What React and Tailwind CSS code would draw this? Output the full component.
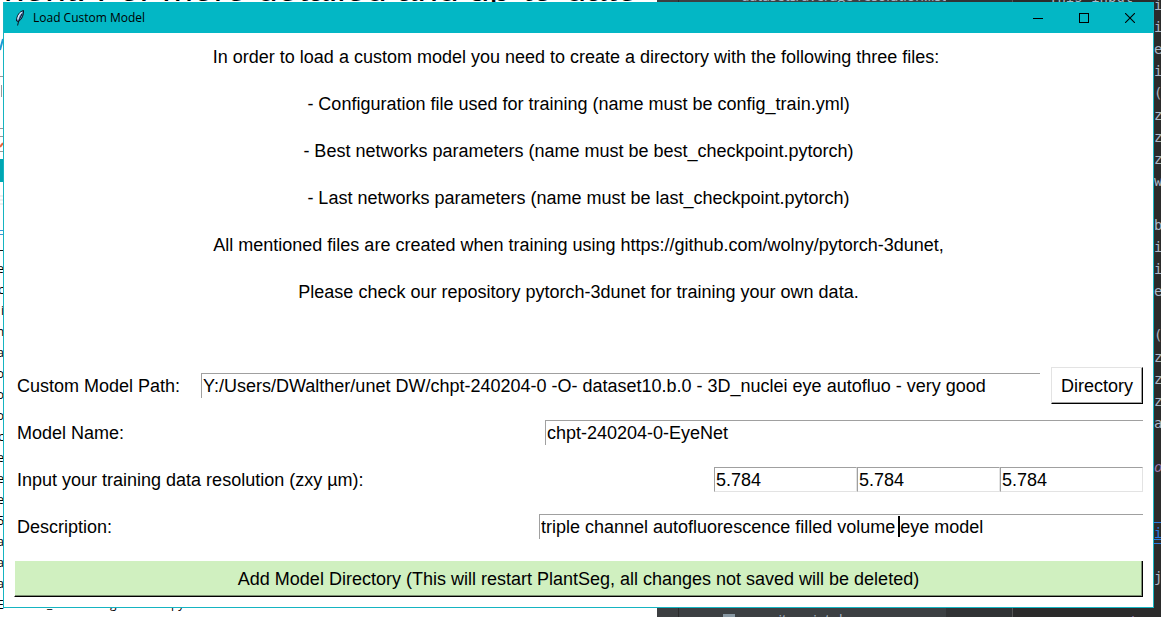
const instructions = [
  'In order to load a custom model you need to create a directory with the following three files:\u00a0',
  '- Configuration file used for training (name must be config_train.yml)',
  '- Best networks parameters (name must be best_checkpoint.pytorch)',
  '- Last networks parameters (name must be last_checkpoint.pytorch)',
  'All mentioned files are created when training using https://github.com/wolny/pytorch-3dunet,',
  'Please check our repository pytorch-3dunet for training your own data.',
];

const listLetters = ['e', 'c', 'i', 'n', 'a', 'o', 'o', 'o', 'c', 'e', 'e', 'e', '5', 'a', 'a', 'a', 'E'];

const codeLines = ['i', 'i', 'e', 'i', '(', 'z', 'z', 'z', 'w', '', 'b', 'i', 'i', 'e', '', '(', 'z', 'z', 'z', 'a', '', 'o', '', '', 'i', '', 'j'];

const fieldClass =
  'block h-[25px] w-full min-w-0 border-l border-t border-[#a0a0a0] bg-white pl-px text-lg leading-6 text-black outline-none';

function Feather() {
  return (
    <svg width="10" height="16" viewBox="0 0 10 16" aria-hidden="true">
      <path d="M8.5 0.5 C5 1.5 1.5 5 1.6 11 L3.6 11.6 C7 9 8.8 5 8.5 0.5 Z" fill="#5b8fd0" stroke="#07121c" strokeWidth="1" />
      <path d="M6.8 2.2 C4.5 4 3 6.5 2.8 9.5" stroke="#e4f2fb" strokeWidth="1.3" fill="none" />
      <path d="M7.2 3.5 C5.5 7 3.5 10 2.6 15.5" stroke="#07121c" strokeWidth="1" fill="none" />
    </svg>
  );
}

function Backdrop() {
  return (
    <div aria-hidden="true" className="absolute inset-0 flex overflow-hidden bg-[#2b2b2b]">
      <div className="relative w-[657px] shrink-0 overflow-hidden bg-white">
        <div className="absolute -top-[34px] left-[4px] whitespace-nowrap font-['Liberation_Sans'] text-[37px] leading-[46px] text-black">
          nent. For more detailed and up-to-date
        </div>
        <svg className="absolute left-0 top-0" width="3" height="260" viewBox="0 0 3 260">
          <path d="M0 50 L3 39" stroke="#1b9ad6" strokeWidth="2" />
          <path d="M0 76.500H3M0 128.500H3M0 136.500H3M0 151.500H3" stroke="#999" />
          <path d="M1.500 85V97" stroke="#999" />
          <path d="M0 147 L3 143" stroke="#e8633a" strokeWidth="2" />
          <rect y="159" width="3" height="23" fill="#00a6b2" />
          <path d="M0 196H3M0 200H3M0 204H3" stroke="#ddd" />
          <path d="M0 230.500H3M0 234.500H3" stroke="#3a97d4" />
          <path d="M0 250.500H3" stroke="#111" />
        </svg>
        <div className="absolute left-0 top-[258px] flex w-[4px] flex-col items-end font-['Open_Sans'] text-xs leading-[21px] text-black">
          {listLetters.map((letter, index) => (
            <span key={index}>{letter}</span>
          ))}
        </div>
        <div className="absolute left-[47px] top-[593px] flex font-['Open_Sans'] text-xs leading-[21px] text-black">
          <span className="w-[63px]">_</span>
          <span className="w-[61px]">g</span>
          <span>py</span>
        </div>
      </div>
      <div className="w-[21px] bg-[#3c3f41]" />
      <div className="relative w-[268px] overflow-hidden border-l border-[#2b2b2b] bg-[#3c4043]">
        <div className="absolute left-[44px] top-[614px] h-[10px] w-[12px] bg-[#8797a2]" />
        <div className="absolute left-[64px] top-[610px] font-['Open_Sans'] text-sm leading-5 text-[#a9b7c6]">securityscript.d</div>
        <div className="absolute -top-[14px] left-[62px] whitespace-nowrap font-['Open_Sans'] text-sm leading-5 text-[#a9b7c6]">
          datasets/average-resolution.list
        </div>
      </div>
      <div className="w-[66px] bg-[#313335]" />
      <div className="relative flex-1 overflow-hidden border-l border-[#555] bg-[#2b2b2b]">
        <div className="absolute left-[7px] top-[612px] flex gap-14 font-['DejaVu_Sans_Mono'] text-sm leading-5">
          <span className="text-[#cc7832]">"""</span>
          <span className="text-[#9876aa]">products</span>
        </div>
        <div className="absolute -top-[13px] left-[36px] whitespace-nowrap font-['DejaVu_Sans_Mono'] text-sm leading-5 text-[#a9b7c6]">This input</div>
      </div>
      <div className="absolute -top-[6px] right-0 w-[7px] overflow-hidden whitespace-nowrap font-['DejaVu_Sans_Mono'] text-sm leading-[22px] text-[#a9b7c6]">
        {codeLines.map((letter, index) => (
          <div
            key={index}
            className={
              index === 24
                ? 'h-[22px] border-y border-[#287bde] leading-5 text-[#287bde] underline'
                : index === 21
                  ? 'h-[22px] italic text-[#9876aa]'
                  : 'h-[22px]'
            }
          >
            {letter}
          </div>
        ))}
      </div>
    </div>
  );
}

function TitleBar() {
  return (
    <header className="flex h-[31px] items-center bg-[#03b7c5] pl-[11px]">
      <Feather />
      <h1 className="ml-2 flex-1 font-['Open_Sans',sans-serif] text-xs leading-4 text-black">Load Custom Model</h1>
      <button type="button" aria-label="Minimize" className="grid h-full w-[46px] place-items-center">
        <svg width="10" height="10" shapeRendering="crispEdges"><path d="M0 5.500H10" stroke="#000" /></svg>
      </button>
      <button type="button" aria-label="Maximize" className="grid h-full w-[46px] place-items-center">
        <svg width="10" height="10"><rect x="0.500" y="0.500" width="9" height="9" fill="none" stroke="#000" /></svg>
      </button>
      <button type="button" aria-label="Close" className="grid h-full w-[46px] place-items-center">
        <svg width="10" height="10"><path d="M0 0L10 10M10 0L0 10" stroke="#000" strokeWidth="1.100" /></svg>
      </button>
    </header>
  );
}

export default function App() {
  return (
    <div className="relative min-h-screen overflow-hidden font-['Liberation_Sans',Arial,sans-serif]">
      <Backdrop />
      <main className="relative ml-[3px] mr-[7px] mt-[2px] border-x border-b border-[#15b4c1] bg-white text-lg text-black">
        <TitleBar />
        <form className="px-[10px] pb-[10px]" onSubmit={(event) => event.preventDefault()}>
          <div className="pb-[46px] pt-px text-center leading-[47px]">
            {instructions.map((line) => (
              <p key={line}>{line}</p>
            ))}
          </div>

          <div className="flex h-[47px] items-center">
            <label htmlFor="path" className="w-[187px] pl-[3px]">Custom Model Path:</label>
            <div className="min-w-0 flex-1">
              <input
                id="path"
                className={fieldClass}
                defaultValue="Y:/Users/DWalther/unet DW/chpt-240204-0 -O- dataset10.b.0 - 3D_nuclei eye autofluo - very good"
              />
            </div>
            <button
              type="button"
              className="ml-[11px] h-[37px] w-[92px] border border-b-black border-l-[#e3e3e3] border-r-black border-t-[#e3e3e3] bg-white shadow-[inset_-1px_-1px_0_#a0a0a0]"
            >
              Directory
            </button>
          </div>

          <div className="grid h-[47px] grid-cols-[531fr_598fr] items-center">
            <label htmlFor="name" className="pl-[3px]">Model Name:</label>
            <input id="name" className={fieldClass} defaultValue="chpt-240204-0-EyeNet" />
          </div>

          <div className="grid h-[47px] grid-cols-[700fr_143fr_143fr_143fr] items-center">
            <label htmlFor="res-z" className="pl-[3px]">Input your training data resolution (zxy µm):</label>
            {['z', 'x', 'y'].map((axis) => (
              <input
                key={axis}
                id={'res-' + axis}
                aria-label={'Resolution ' + axis}
                className={fieldClass + ' border-b border-r border-b-[#e3e3e3] border-r-[#e3e3e3] pt-px'}
                defaultValue="5.784"
              />
            ))}
          </div>

          <div className="grid h-[47px] grid-cols-[525fr_604fr] items-center">
            <label htmlFor="description" className="pl-[3px]">Description:</label>
            <div className="relative">
              <input
                id="description"
                className={fieldClass}
                defaultValue="triple channel autofluorescence filled volume eye model"
              />
              <span className="absolute left-[359px] top-[2px] h-[21px] w-[2px] bg-black" />
            </div>
          </div>

          <button
            type="submit"
            className="mt-[11px] block h-9 w-full border-b border-l border-r border-b-black border-l-white border-r-black bg-[#d0f0c0] shadow-[inset_-1px_-1px_0_#7d9073]"
          >
            Add Model Directory (This will restart PlantSeg, all changes not saved will be deleted)
          </button>
        </form>
      </main>
    </div>
  );
}
